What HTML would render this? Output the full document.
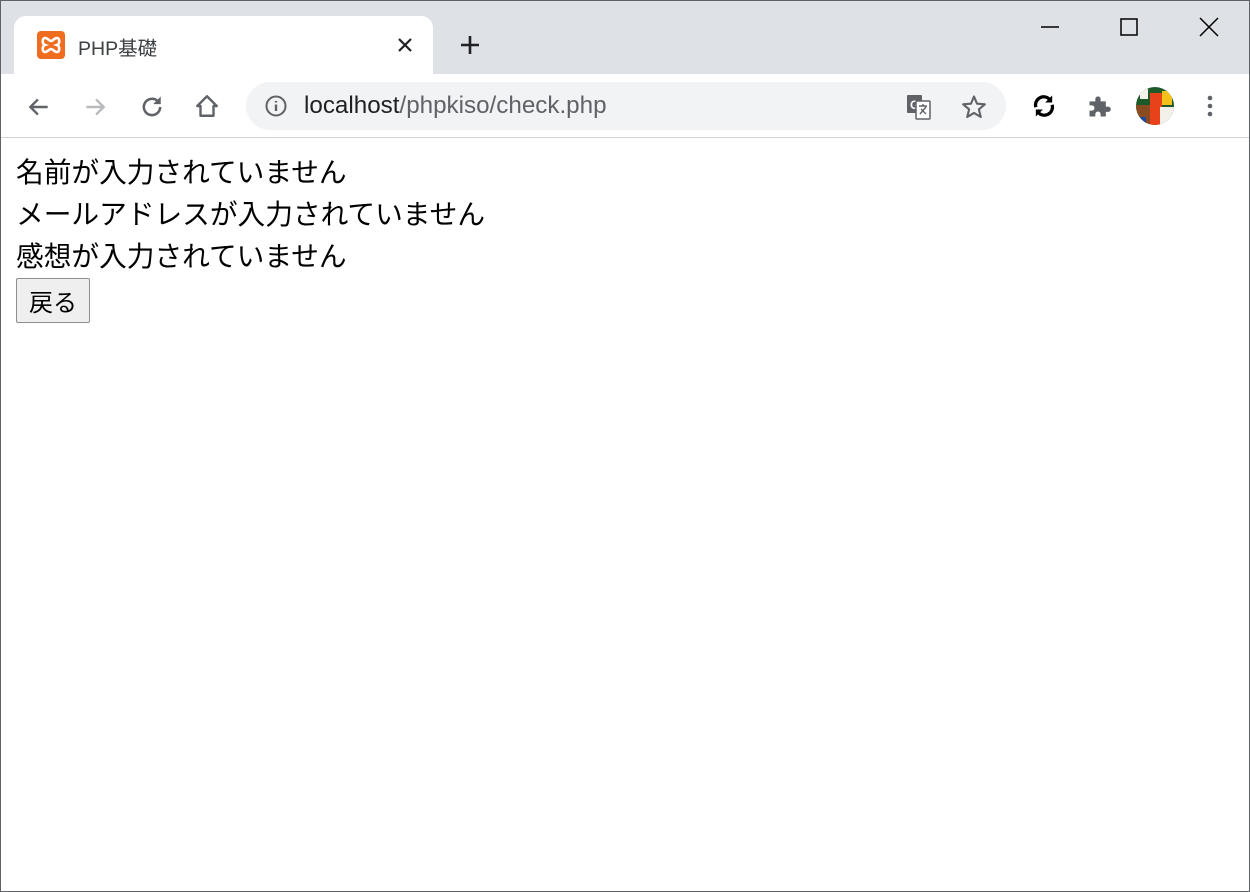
<!DOCTYPE html>
<html><head><meta charset="utf-8"><style>
*{margin:0;padding:0;box-sizing:border-box}
body{width:1250px;height:892px;overflow:hidden;background:#fff;font-family:"Liberation Sans","Noto Sans CJK JP",sans-serif;position:relative}
.frame{position:absolute;inset:0;border:1px solid #5f6368;pointer-events:none;z-index:10}
.tabbar{position:absolute;left:0;top:0;width:1250px;height:74px;background:#dee1e6}
.tab{position:absolute;left:14px;top:16px;width:419px;height:60px;background:#fff;border-radius:12px 12px 0 0}
.tab .t{position:absolute;left:64px;top:16px;font-size:19.5px;color:#3c4043}
.toolbar{position:absolute;left:0;top:74px;width:1250px;height:64px;background:#fff;border-bottom:1px solid #d0d3d6}
.omni{position:absolute;left:246px;top:8px;width:760px;height:48px;background:#f1f3f4;border-radius:24px}
.url{position:absolute;left:58px;top:10px;font-size:24.2px;color:#202124}
.url span{color:#5f6368}
.content{position:absolute;left:16px;top:152px;font-size:27.7px;line-height:42px;color:#000;white-space:nowrap}
button{position:absolute;left:16px;top:278px;width:74px;height:45px;background:#efefef;border:1px solid #8f8f8f;border-radius:2px;font-size:24px;font-family:"Liberation Sans","Noto Sans CJK JP",sans-serif;color:#000}
svg{position:absolute}
</style></head><body>
<div class="tabbar">
<div class="tab">
<svg style="left:22px;top:14px" width="30" height="30" viewBox="0 0 30 30"><rect x="1" y="1" width="28" height="28" rx="4" fill="#f06d1f"/><path d="M9 8c-3 0-3 6 0 7c-3 1-3 7 0 7c3 0 4-3 6-3s3 3 6 3c3 0 3-6 0-7c3-1 3-7 0-7c-3 0-4 3-6 3s-3-3-6-3z" fill="none" stroke="#fff" stroke-width="2.6"/></svg>
<div class="t">PHP基礎</div>
<svg style="left:383px;top:21px" width="16" height="16" viewBox="0 0 16 16"><path d="M2 2L14 14M14 2L2 14" stroke="#202124" stroke-width="2.2"/></svg>
</div>
<svg style="left:460px;top:35px" width="20" height="20" viewBox="0 0 20 20"><path d="M10 1V19M1 10H19" stroke="#202124" stroke-width="2.6"/></svg>
<svg style="left:1041px;top:26px" width="18" height="2" viewBox="0 0 18 2"><path d="M0 1H18" stroke="#000" stroke-width="1.5"/></svg>
<svg style="left:1120px;top:18px" width="18" height="18" viewBox="0 0 18 18"><rect x="1" y="1" width="16" height="16" fill="none" stroke="#000" stroke-width="1.5"/></svg>
<svg style="left:1199px;top:17px" width="20" height="20" viewBox="0 0 20 20"><path d="M1 1L19 19M19 1L1 19" stroke="#000" stroke-width="1.5"/></svg>
</div>
<div class="toolbar">
<svg style="left:26px;top:20px" width="26" height="26" viewBox="0 0 24 24"><path d="M20 12H5M11 5L4 12L11 19" fill="none" stroke="#5f6368" stroke-width="2.2"/></svg>
<svg style="left:82px;top:20px" width="26" height="26" viewBox="0 0 24 24"><path d="M4 12H19M13 5L20 12L13 19" fill="none" stroke="#b8babd" stroke-width="2.2"/></svg>
<svg style="left:138px;top:19px" width="28" height="28" viewBox="0 0 24 24"><path d="M19 12A7 7 0 1 1 16.5 6.6" fill="none" stroke="#5f6368" stroke-width="2.2"/><path d="M19.5 3V9.5H13Z" fill="#5f6368"/></svg>
<svg style="left:194px;top:19px" width="26" height="26" viewBox="0 0 24 24"><path d="M3 12L12 3L21 12H18V21H6V12Z" fill="none" stroke="#5f6368" stroke-width="2.2" stroke-linejoin="round"/></svg>
<div class="omni">
<svg style="left:18px;top:12px" width="24" height="24" viewBox="0 0 24 24"><circle cx="12" cy="12" r="9.5" fill="none" stroke="#5f6368" stroke-width="2"/><path d="M12 10.5V17M12 7V8.5" stroke="#5f6368" stroke-width="2.4"/></svg>
<div class="url">localhost<span>/phpkiso/check.php</span></div>
<svg style="left:660px;top:12px" width="26" height="26" viewBox="0 0 26 26"><rect x="1" y="1" width="15" height="18" rx="1" fill="#5f6368"/><text x="4" y="15" font-size="12" font-weight="bold" fill="#fff" font-family="Liberation Sans">G</text><rect x="10" y="7" width="14" height="18" rx="1" fill="#fff" stroke="#5f6368" stroke-width="1.5"/><path d="M13 12H21M17 10V12M14 20L20 13M15 15L20 20" stroke="#5f6368" stroke-width="1.4" fill="none"/></svg>
<svg style="left:714px;top:11px" width="28" height="28" viewBox="0 0 24 24"><path d="M12 3L14.6 9.2L21.3 9.7L16.2 14L17.8 20.6L12 17.1L6.2 20.6L7.8 14L2.7 9.7L9.4 9.2Z" fill="none" stroke="#5f6368" stroke-width="1.8" stroke-linejoin="round"/></svg>
</div>
<svg style="left:1030px;top:18px" width="28" height="28" viewBox="0 0 24 24"><path d="M5 13A7 7 0 0 1 17 6.5M19 11A7 7 0 0 1 7 17.5" fill="none" stroke="#000" stroke-width="2.8"/><path d="M19 3V9H13Z M5 21V15H11Z" fill="#000"/></svg>
<svg style="left:1086px;top:18px" width="28" height="28" viewBox="0 0 24 24"><path d="M3 8H8V6A2.2 2.2 0 0 1 12.5 6V8H17V12.5H19A2.2 2.2 0 0 1 19 17H17V21H12.5V19A2.2 2.2 0 0 0 8 19V21H3V16H5A2.2 2.2 0 0 0 5 11.5H3Z" fill="#5f6368"/></svg>
<svg style="left:1136px;top:13px" width="38" height="38" viewBox="0 0 38 38"><defs><clipPath id="c"><circle cx="19" cy="19" r="19"/></clipPath></defs><g clip-path="url(#c)"><rect width="38" height="38" fill="#1d5a2a"/><rect x="0" y="18" width="16" height="20" fill="#8a4a22"/><rect x="14" y="6" width="12" height="32" fill="#e8421a"/><rect x="26" y="4" width="10" height="14" fill="#f2c21a"/><rect x="24" y="20" width="14" height="18" fill="#f4f1ea"/><rect x="4" y="2" width="8" height="10" fill="#f4f1ea"/><rect x="0" y="30" width="10" height="8" fill="#1f49a0"/></g></svg>
<svg style="left:1206px;top:21px" width="8" height="24" viewBox="0 0 8 24"><circle cx="4" cy="3" r="2.3" fill="#5f6368"/><circle cx="4" cy="11" r="2.3" fill="#5f6368"/><circle cx="4" cy="19" r="2.3" fill="#5f6368"/></svg>
</div>
<div class="content">名前が入力されていません<br>メールアドレスが入力されていません<br>感想が入力されていません</div>
<button>戻る</button>
<div class="frame"></div>
</body></html>
